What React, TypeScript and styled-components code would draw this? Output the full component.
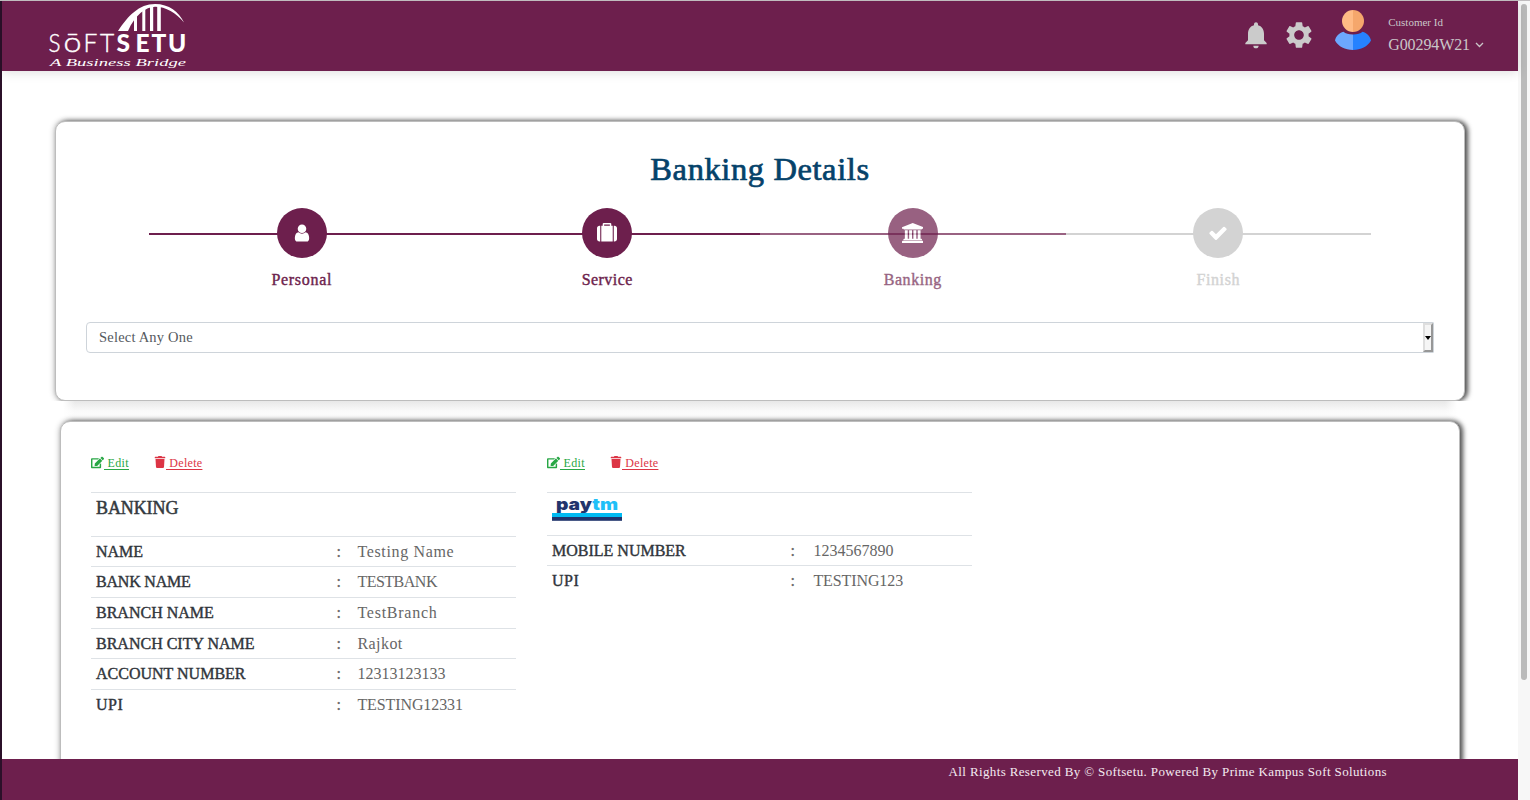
import React from "react";
import styled, { createGlobalStyle } from "styled-components";
import { MdNotifications, MdSettings } from "react-icons/md";
import { FaEdit, FaTrash } from "react-icons/fa";

const plum = "#6d1f4d";

const GlobalStyle = createGlobalStyle`
  *, *::before, *::after { box-sizing: border-box; }
  html, body { margin: 0; padding: 0; height: 100%; overflow: hidden; background: #fff; }
  body { font-family: "Source Serif Pro", "Liberation Serif", serif; color: #666; }
`;

const Window = styled.div`
  width: 1530px;
  height: 800px;
  display: grid;
  grid-template-columns: 1518px 12px;
  overflow: hidden;
  border-top: 1px solid #c0bcbe;
`;

const Page = styled.div`
  display: flex;
  flex-direction: column;
  height: 799px;
  border-left: 2px solid #2b1029;
`;

const ScrollTrack = styled.div`
  background: #f7f7f7;
  padding: 3px 3px 0;
`;

const ScrollThumb = styled.div`
  height: 676px;
  border-radius: 3px;
  background: #bababa;
`;

const Text = styled.span<{ $ls?: number }>`
  letter-spacing: ${(p) => p.$ls ?? 0}px;
  white-space: pre;
`;

const Header = styled.header`
  flex: none;
  height: 70px;
  display: flex;
  justify-content: space-between;
  background: ${plum};
  padding: 0 34px 0 44px;
  box-shadow: 0 2px 10px rgba(0, 0, 0, 0.12);
  color: #cac6c8;
  z-index: 1;
`;

const HeaderTools = styled.div`
  display: flex;
  align-items: flex-start;
`;

const IconButton = styled.span<{ $gap: number }>`
  display: flex;
  width: 32px;
  height: 32px;
  font-size: 32px;
  margin: 18px ${(p) => p.$gap}px 0 0;
  color: #cbcbcb;
`;

const Avatar = styled.svg`
  margin: 8px 16px 0 0;
`;

const Account = styled.div`
  display: flex;
  flex-direction: column;
  padding-top: 13px;
`;

const AccountLabel = styled.div`
  font-size: 11px;
  line-height: 16px;
`;

const AccountId = styled.div`
  display: flex;
  align-items: center;
  gap: 5px;
  font-size: 16px;
  line-height: 30px;
`;

const Main = styled.main`
  height: 688px;
  overflow: hidden;
  padding: 50px 53px 0 53px;
`;

const panelShadow = `
  border: 1px solid #bdbdbd;
  box-shadow: 3px 0 5px rgba(0, 0, 0, 0.62), 0 0 6px rgba(0, 0, 0, 0.32);
`;

const StepCard = styled.section`
  height: 280px;
  border-radius: 10px;
  background: #fff;
  padding: 28px 30px 0;
  clip-path: inset(-14px -14px 0 -14px);
  ${panelShadow}
`;

const CardGap = styled.div`
  height: 20px;
  margin: 0 8px;
  background:
    linear-gradient(90deg, #fff, transparent 12px, transparent calc(100% - 12px), #fff),
    linear-gradient(#e8e8e8, #fafafa 50%, #fff);
`;

const Title = styled.h1`
  margin: 0;
  text-align: center;
  font-size: 32.5px;
  line-height: 38px;
  font-weight: 400;
  color: #05426a;
  -webkit-text-stroke: 0.7px #05426a;
`;

const Steps = styled.div`
  display: grid;
  grid-template-columns: repeat(4, 305.5px);
  justify-content: center;
  margin-top: 20px;
`;

type Tone = "done" | "current" | "todo";
const toneColor: Record<Tone, string> = { done: plum, current: plum, todo: "#d3d3d3" };

const Step = styled.div<{ $tone: Tone }>`
  display: flex;
  flex-direction: column;
  align-items: center;
  color: ${(p) => toneColor[p.$tone]};
`;

const StepTrack = styled.div<{ $tone: Tone }>`
  position: relative;
  width: 100%;
  height: 50px;
  display: flex;
  justify-content: center;
  &::before {
    content: "";
    position: absolute;
    left: 0;
    right: 0;
    top: 25px;
    height: 2px;
    background: currentColor;
    opacity: ${(p) => (p.$tone === "current" ? 0.7 : 1)};
  }
`;

const StepCircle = styled.div<{ $tone: Tone }>`
  width: 50px;
  height: 50px;
  border-radius: 50%;
  background: ${(p) => toneColor[p.$tone]};
  opacity: ${(p) => (p.$tone === "current" ? 0.7 : 1)};
  display: flex;
  align-items: center;
  justify-content: center;
  z-index: 1;
  svg { height: 20px; fill: #fff; }
`;

const StepLabel = styled.div<{ $tone: Tone }>`
  margin-top: 12px;
  font-size: 16px;
  line-height: 20px;
  -webkit-text-stroke: 0.4px currentColor;
  opacity: ${(p) => (p.$tone === "current" ? 0.7 : 1)};
`;

const Select = styled.div`
  display: flex;
  align-items: stretch;
  justify-content: space-between;
  height: 31px;
  margin: 32px 0 0 0;
  border: 1px solid #ced4da;
  border-radius: 4px 1px 1px 4px;
  padding-left: 12px;
  font-size: 14.5px;
  line-height: 29px;
  color: #55595e;
`;

const SelectArrow = styled.span`
  width: 10px;
  display: flex;
  align-items: center;
  justify-content: center;
  background: #f5f5f5;
  border: 2px solid;
  border-color: #dedede #979797 #979797 #dedede;
`;

const DetailsCard = styled.section`
  height: 420px;
  margin: 0 5px;
  border-radius: 10px;
  background: #fff;
  padding: 30px 29px 0 30px;
  display: grid;
  grid-template-columns: repeat(3, 425px);
  column-gap: 31px;
  ${panelShadow}
`;

const Actions = styled.div`
  display: flex;
  gap: 25px;
  height: 40px;
  padding-top: 3px;
`;

const ActionLink = styled.a<{ $color: string }>`
  display: flex;
  align-items: flex-start;
  height: 16px;
  font-size: 12px;
  line-height: 16px;
  color: ${(p) => p.$color};
  svg { margin-top: 1px; }
  span { text-decoration: underline; text-underline-offset: 2px; }
`;

const Table = styled.div`
  display: flex;
  flex-direction: column;
`;

const TableHead = styled.div<{ $height: number }>`
  height: ${(p) => p.$height}px;
  border-top: 1px solid #dee2e6;
  padding: 4px 5px 0;
  font-size: 18px;
  line-height: 22px;
  color: #343a40;
  -webkit-text-stroke: 0.5px #343a40;
`;

const Row = styled.div<{ $colon: number }>`
  display: grid;
  grid-template-columns: ${(p) => p.$colon}px ${(p) => 266.4 - p.$colon}px 1fr;
  height: 30.6px;
  border-top: 1px solid #dee2e6;
  font-size: 16px;
  line-height: 29px;
  color: #666;
`;

const RowLabel = styled(Text)`
  padding-left: 5px;
  color: #30353b;
  -webkit-text-stroke: 0.4px #30353b;
`;

const Colon = styled.span`
  -webkit-text-stroke: 0.3px #666;
`;

const PaytmLogo = styled.svg`
  display: block;
  overflow: visible;
`;

const Footer = styled.footer`
  height: 41px;
  background: ${plum};
  color: #f3eaf0;
  font-size: 13px;
  line-height: 16px;
  padding: 5px 131px 0 0;
  text-align: right;
`;

const Logo = () => (
  <svg width="142" height="70" viewBox="46 1 142 70" fill="#fff">
    <path d="M118 31C128 16 139 4 155 4C169 4 179 12 184 22.5C176 13 166 6.800 155 6.800C146 6.800 135 15 128 31Z" />
    <path d="M134 17l3-3.500V31h-3zM142.300 11l3-2V31h-3zM150 7h3.200V31H150zM157.200 6h3.600V31h-3.600z" />
    <g fontFamily="Lato, sans-serif" fontSize="24.500">
      <g fontWeight="300" stroke="#fff" strokeWidth="0.400">
        <text x="48.500" y="52" textLength="12" lengthAdjust="spacingAndGlyphs">S</text>
        <text x="63.500" y="52" fontSize="27" textLength="18" lengthAdjust="spacingAndGlyphs">ō</text>
        <text x="83.500" y="52">F</text>
        <text x="100" y="52">T</text>
      </g>
      <g fontWeight="900">
        <text x="116.500" y="52">S</text>
        <text x="135.500" y="52">E</text>
        <text x="151.500" y="52">T</text>
        <text x="168" y="52">U</text>
      </g>
    </g>
    <text x="50" y="65.500" fontFamily="Liberation Serif, serif" fontStyle="italic" fontSize="9.500" textLength="136" lengthAdjust="spacingAndGlyphs">
      A Business Bridge
    </text>
  </svg>
);

const UserAvatar = () => (
  <Avatar width="38" height="42" viewBox="0 0 38 42">
    <path d="M19 1a11 11 0 0 0 0 22z" fill="#ffbb85" />
    <path d="M19 1a11 11 0 0 1 0 22z" fill="#f5a76c" />
    <path d="M19 25.500C14.500 25.500 11.500 24.500 9.500 22.800C5 24 1.800 27.500 1 31.500C4.500 37.500 11 41 19 41z" fill="#6ca8ff" />
    <path d="M19 25.500C23.500 25.500 26.500 24.500 28.500 22.800C33 24 36.200 27.500 37 31.500C33.500 37.500 27 41 19 41z" fill="#2682ff" />
  </Avatar>
);

const icons = {
  user: {
    w: 1792,
    d: "M1536 1399q0 109-62.5 187t-150.5 78h-854q-88 0-150.5-78t-62.5-187q0-85 8.5-160.5t31.5-152 58.5-131 94-89 134.5-34.5q131 128 313 128t313-128q76 0 134.5 34.5t94 89 58.5 131 31.5 152 8.5 160.5zm-256-887q0 159-112.5 271.5t-271.5 112.5-271.5-112.5-112.5-271.5 112.5-271.5 271.5-112.5 271.5 112.5 112.5 271.5z",
  },
  suitcase: {
    w: 1792,
    d: "M640 256h512v-128h-512v128zm-352 0v1408h-64q-92 0-158-66t-66-158v-960q0-92 66-158t158-66h64zm1120 0v1408h-1024v-1408h128v-160q0-40 28-68t68-28h576q40 0 68 28t28 68v160h128zm384 224v960q0 92-66 158t-158 66h-64v-1408h64q92 0 158 66t66 158z",
  },
  bank: {
    w: 1920,
    d: "M960 0l960 384v128h-128q0 26-20.5 45t-48.5 19h-1526q-28 0-48.5-19t-20.5-45h-128v-128zm-704 640h256v768h128v-768h256v768h128v-768h256v768h128v-768h256v768h59q28 0 48.5 19t20.5 45v64h-1664v-64q0-26 20.5-45t48.5-19h59v-768zm1595 960q28 0 48.5 19t20.5 45v128h-1920v-128q0-26 20.5-45t48.5-19h1782z",
  },
  check: {
    w: 1792,
    d: "M1671 566q0 40-28 68l-724 724-136 136q-28 28-68 28t-68-28l-136-136-362-362q-28-28-28-68t28-68l136-136q28-28 68-28t68 28l294 295 656-657q28-28 68-28t68 28l136 136q28 28 28 68z",
  },
};

const steps: { label: string; ls: number; tone: Tone; icon: keyof typeof icons }[] = [
  { label: "Personal", ls: 0.7, tone: "done", icon: "user" },
  { label: "Service", ls: 0.45, tone: "done", icon: "suitcase" },
  { label: "Banking", ls: 0.55, tone: "current", icon: "bank" },
  { label: "Finish", ls: 0.6, tone: "todo", icon: "check" },
];

type Entry = { label: string; labelLs?: number; value: string; ls?: number };

const bankRows: Entry[] = [
  { label: "NAME", value: "Testing Name", ls: 0.65 },
  { label: "BANK NAME", labelLs: -0.2, value: "TESTBANK", ls: -0.5 },
  { label: "BRANCH NAME", value: "TestBranch", ls: 0.75 },
  { label: "BRANCH CITY NAME", value: "Rajkot", ls: 0.45 },
  { label: "ACCOUNT NUMBER", value: "12313123133" },
  { label: "UPI", labelLs: 0.5, value: "TESTING12331", ls: -0.1 },
];

const paytmRows: Entry[] = [
  { label: "MOBILE NUMBER", value: "1234567890" },
  { label: "UPI", labelLs: 0.5, value: "TESTING123", ls: -0.1 },
];

const Entries = ({ rows, colon }: { rows: Entry[]; colon: number }) => (
  <>
    {rows.map((r) => (
      <Row key={r.label} $colon={colon}>
        <RowLabel $ls={r.labelLs}>{r.label}</RowLabel>
        <Colon>:</Colon>
        <Text $ls={r.ls}>{r.value}</Text>
      </Row>
    ))}
  </>
);

const EntryActions = () => (
  <Actions>
    <ActionLink $color="#28a745">
      <FaEdit size={13} />
      <Text $ls={0.4}> Edit</Text>
    </ActionLink>
    <ActionLink $color="#dc3545">
      <FaTrash size={12} />
      <Text $ls={0.3}> Delete</Text>
    </ActionLink>
  </Actions>
);

export default function App() {
  return (
    <Window>
      <GlobalStyle />
      <Page>
        <Header>
          <Logo />
          <HeaderTools>
            <IconButton $gap={11}><MdNotifications /></IconButton>
            <IconButton $gap={19}><MdSettings /></IconButton>
            <UserAvatar />
            <Account>
              <AccountLabel><Text>Customer Id</Text></AccountLabel>
              <AccountId>
                <Text $ls={-0.1}>G00294W21</Text>
                <svg width="9" height="6" viewBox="0 0 9 6" fill="none" stroke="#cac6c8" strokeWidth="1.300">
                  <path d="M1 1l3.500 3.500L8 1" />
                </svg>
              </AccountId>
            </Account>
          </HeaderTools>
        </Header>
        <Main>
          <StepCard>
            <Title><Text $ls={0.6}>Banking Details</Text></Title>
            <Steps>
              {steps.map((s) => (
                <Step key={s.label} $tone={s.tone}>
                  <StepTrack $tone={s.tone}>
                    <StepCircle $tone={s.tone}>
                      <svg viewBox={`0 0 ${icons[s.icon].w} 1792`}><path d={icons[s.icon].d} /></svg>
                    </StepCircle>
                  </StepTrack>
                  <StepLabel $tone={s.tone}><Text $ls={s.ls}>{s.label}</Text></StepLabel>
                </Step>
              ))}
            </Steps>
            <Select>
              <Text $ls={0.2}>Select Any One</Text>
              <SelectArrow>
                <svg width="6" height="4" viewBox="0 0 6 4"><path d="M0 0h6L3 4z" /></svg>
              </SelectArrow>
            </Select>
          </StepCard>
          <CardGap />
          <DetailsCard>
            <div>
              <EntryActions />
              <Table>
                <TableHead $height={43.85}><Text $ls={-0.1}>BANKING</Text></TableHead>
                <Entries rows={bankRows} colon={245.5} />
              </Table>
            </div>
            <div>
              <EntryActions />
              <Table>
                <TableHead $height={42.85}>
                  <PaytmLogo width="70" height="24" viewBox="0 0 70 24">
                    <text x="4" y="12.500" fontFamily="Inter, sans-serif" fontWeight="900" fontSize="16" textLength="62" lengthAdjust="spacingAndGlyphs" fill="#22346c" stroke="none">
                      pay<tspan fill="#1fc0f8">tm</tspan>
                    </text>
                    <rect y="16" width="70" height="4.300" fill="#00baf2" />
                    <rect y="20" width="70" height="3.800" fill="#20336b" />
                  </PaytmLogo>
                </TableHead>
                <Entries rows={paytmRows} colon={243.5} />
              </Table>
            </div>
          </DetailsCard>
        </Main>
        <Footer>
          <Text $ls={0.37}>All Rights Reserved By © Softsetu. Powered By Prime Kampus Soft Solutions</Text>
        </Footer>
      </Page>
      <ScrollTrack><ScrollThumb /></ScrollTrack>
    </Window>
  );
}
